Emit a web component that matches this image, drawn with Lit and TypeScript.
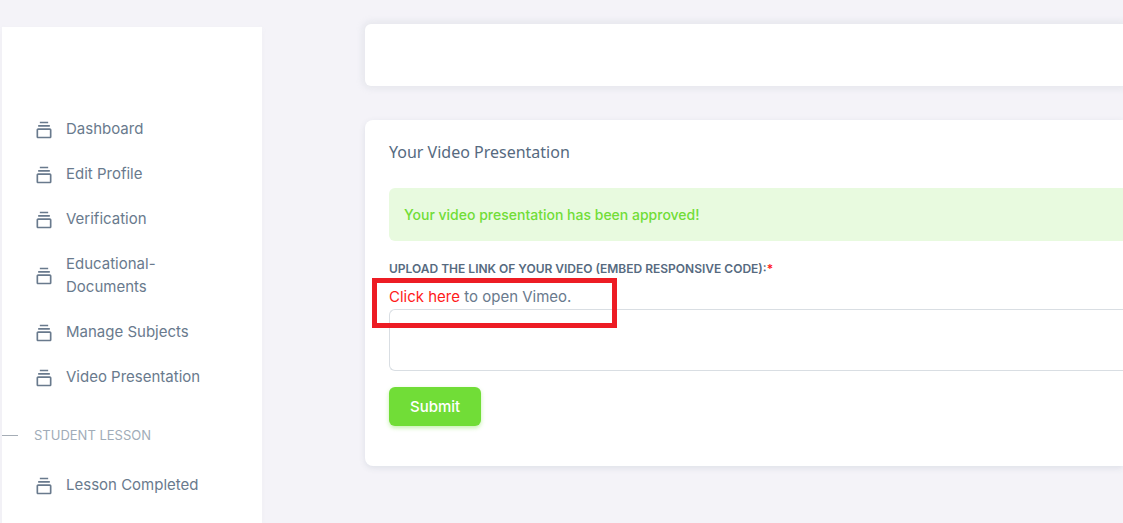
import { LitElement, html, css } from "lit";
import { customElement, property } from "lit/decorators.js";

@customElement("nav-item")
class NavItem extends LitElement {
  @property() label = "";

  static styles = css`
    :host {
      display: block;
    }
    .link {
      display: flex;
      align-items: center;
      gap: 12px;
      padding: 11px 32px;
      color: #697a8d;
      text-decoration: none;
      font-size: 15px;
      line-height: 23px;
    }
    .icon {
      flex: none;
      width: 20px;
      height: 20px;
      fill: currentColor;
      margin-top: 2px;
    }
    .text {
      max-width: 140px;
    }
  `;

  render() {
    return html`<a class="link" href="#">
      <svg class="icon" viewBox="0 0 24 24" aria-hidden="true">
        <path
          d="M19 10H5c-1.103 0-2 .897-2 2v8c0 1.103.897 2 2 2h14c1.103 0 2-.897 2-2v-8c0-1.103-.897-2-2-2zM5 20v-8h14l.002 8H5zM5 6h14v2H5zm2-4h10v2H7z"
        />
      </svg>
      <span class="text">${this.label}</span>
    </a>`;
  }
}

@customElement("app-root")
class AppRoot extends LitElement {
  static styles = css`
    * {
      box-sizing: border-box;
    }
    :host {
      display: flex;
      align-items: stretch;
      min-height: 100vh;
      box-sizing: border-box;
      padding-left: 2px;
      background: #f4f3f8;
      color: #697a8d;
      font-family: Inter, "Liberation Sans", sans-serif;
      font-size: 15px;
      line-height: 23px;
      overflow: hidden;
    }
    .sidebar {
      flex: none;
      width: 260px;
      margin-top: 27px;
      padding-top: 79px;
      background: #fff;
      box-shadow: 0 2px 6px rgba(161, 172, 184, 0.05);
    }
    .section {
      display: flex;
      align-items: center;
      gap: 16px;
      margin: 0;
      padding: 26px 0 17px;
      color: #a1acb8;
      font-size: 13px;
      font-weight: 400;
      line-height: 20px;
      text-transform: uppercase;
    }
    .section::before {
      content: "";
      width: 16px;
      height: 1px;
      background: #a5adb6;
    }
    .content {
      flex: 1;
      min-width: 0;
      margin-left: 103px;
      padding-top: 24px;
    }
    .topbar {
      height: 62px;
      border-radius: 6px 0 0 6px;
      background: #fff;
      box-shadow: 0 0 6px 3px rgba(161, 172, 184, 0.16);
    }
    .card {
      margin-top: 34px;
      padding: 20px 0 40px 24px;
      border-radius: 8px 0 0 8px;
      background: #fff;
      box-shadow: 0 2px 6px rgba(67, 89, 113, 0.12);
    }
    .title {
      margin: 0;
      color: #566a7f;
      font-family: "Noto Sans", sans-serif;
      font-size: 16px;
      font-weight: 400;
      line-height: 24px;
    }
    .alert {
      margin-top: 24px;
      padding: 15px;
      border-radius: 6px 0 0 6px;
      background: #e8fadf;
      color: #71dd37;
      font-size: 14px;
      font-weight: 500;
    }
    .label {
      display: block;
      margin-top: 18px;
      color: #566a7f;
      font-size: 12px;
      font-weight: 600;
      line-height: 20px;
      text-transform: uppercase;
    }
    .required,
    .vimeo {
      color: #ff1a1a;
      text-decoration: none;
    }
    .hint {
      position: relative;
      margin: 6px 0 0;
    }
    .marker {
      position: absolute;
      left: -17px;
      top: -7px;
      width: 245px;
      height: 50px;
      border: 5px solid #ed1c24;
      pointer-events: none;
    }
    .code {
      display: block;
      width: 100%;
      height: 62px;
      margin: 1px 0 0;
      padding: 7px 14px;
      border: 1px solid #d9dee3;
      border-right: 0;
      border-radius: 6px 0 0 6px;
      background: #fff;
      color: inherit;
      font: inherit;
      resize: none;
      outline: none;
    }
    .submit {
      display: block;
      margin-top: 16px;
      padding: 8px 21px;
      border: 0;
      border-radius: 6px;
      background: #71dd37;
      box-shadow: 0 2px 4px rgba(113, 221, 55, 0.4);
      color: #fff;
      font: inherit;
      font-weight: 500;
    }
  `;

  private items = [
    "Dashboard",
    "Edit Profile",
    "Verification",
    "Educational-Documents",
    "Manage Subjects",
    "Video Presentation",
  ];

  render() {
    return html`
      <nav class="sidebar">
        ${this.items.map((label) => html`<nav-item .label=${label}></nav-item>`)}
        <h2 class="section">Student Lesson</h2>
        <nav-item .label=${"Lesson Completed"}></nav-item>
      </nav>
      <main class="content">
        <header class="topbar"></header>
        <section class="card">
          <h1 class="title">Your Video Presentation</h1>
          <div class="alert" role="status">Your video presentation has been approved!</div>
          <form @submit=${(e: Event) => e.preventDefault()}>
            <label class="label" for="code"
              >Upload the link of your video (embed responsive code):<span class="required">*</span></label
            >
            <p class="hint">
              <a class="vimeo" href="#">Click here</a> to open Vimeo.
              <span class="marker"></span>
            </p>
            <textarea class="code" id="code"></textarea>
            <button class="submit" type="submit">Submit</button>
          </form>
        </section>
      </main>
    `;
  }
}
